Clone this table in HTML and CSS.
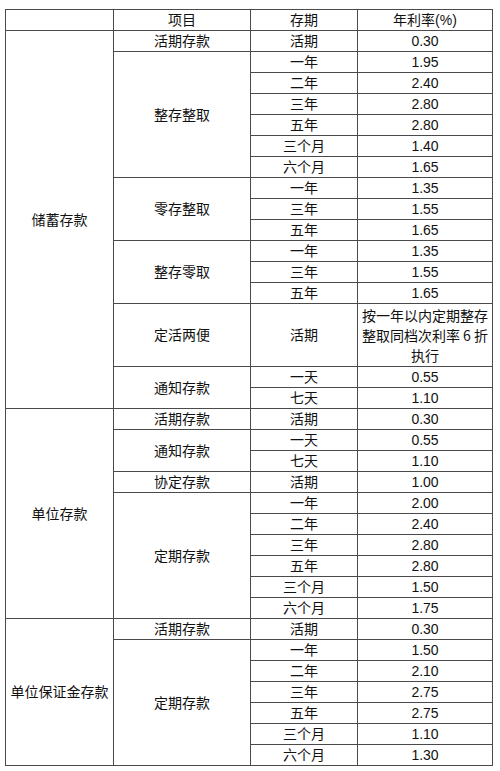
FILE: index.html
```html
<!DOCTYPE html>
<html lang="zh-CN">
<head>
<meta charset="utf-8">
<link rel="stylesheet" href="styles.css">
</head>
<body>
<table class="rates">
<colgroup>
<col class="c1"><col class="c2"><col class="c3"><col class="c4">
</colgroup>
<tr><td></td><td>项目</td><td>存期</td><td>年利率(%)</td></tr>
<tr><td rowspan="16">储蓄存款</td><td>活期存款</td><td>活期</td><td>0.30</td></tr>
<tr><td rowspan="6">整存整取</td><td>一年</td><td>1.95</td></tr>
<tr><td>二年</td><td>2.40</td></tr>
<tr><td>三年</td><td>2.80</td></tr>
<tr><td>五年</td><td>2.80</td></tr>
<tr><td>三个月</td><td>1.40</td></tr>
<tr><td>六个月</td><td>1.65</td></tr>
<tr><td rowspan="3">零存整取</td><td>一年</td><td>1.35</td></tr>
<tr><td>三年</td><td>1.55</td></tr>
<tr><td>五年</td><td>1.65</td></tr>
<tr><td rowspan="3">整存零取</td><td>一年</td><td>1.35</td></tr>
<tr><td>三年</td><td>1.55</td></tr>
<tr><td>五年</td><td>1.65</td></tr>
<tr class="tall"><td>定活两便</td><td>活期</td><td class="note">按一年以内定期整存<br>整取同档次利率 6 折<br>执行</td></tr>
<tr><td rowspan="2">通知存款</td><td>一天</td><td>0.55</td></tr>
<tr><td>七天</td><td>1.10</td></tr>
<tr><td rowspan="10">单位存款</td><td>活期存款</td><td>活期</td><td>0.30</td></tr>
<tr><td rowspan="2">通知存款</td><td>一天</td><td>0.55</td></tr>
<tr><td>七天</td><td>1.10</td></tr>
<tr><td>协定存款</td><td>活期</td><td>1.00</td></tr>
<tr><td rowspan="6">定期存款</td><td>一年</td><td>2.00</td></tr>
<tr><td>二年</td><td>2.40</td></tr>
<tr><td>三年</td><td>2.80</td></tr>
<tr><td>五年</td><td>2.80</td></tr>
<tr><td>三个月</td><td>1.50</td></tr>
<tr><td>六个月</td><td>1.75</td></tr>
<tr><td rowspan="7">单位保证金存款</td><td>活期存款</td><td>活期</td><td>0.30</td></tr>
<tr><td rowspan="6">定期存款</td><td>一年</td><td>1.50</td></tr>
<tr><td>二年</td><td>2.10</td></tr>
<tr><td>三年</td><td>2.75</td></tr>
<tr><td>五年</td><td>2.75</td></tr>
<tr><td>三个月</td><td>1.10</td></tr>
<tr><td>六个月</td><td>1.30</td></tr>
</table>
</body>
</html>
```
FILE: styles.css
```css
html, body {
  margin: 0;
  padding: 0;
  background: #ffffff;
}
body {
  padding: 9px 0 0 5px;
}
.rates {
  border-collapse: collapse;
  table-layout: fixed;
  width: 487px;
  font-family: "Liberation Sans", "Noto Sans CJK SC", sans-serif;
  font-size: 14px;
  color: #111111;
}
.c1 { width: 108px; }
.c2 { width: 137px; }
.c3 { width: 107px; }
.c4 { width: 135px; }
.rates td {
  border: 1px solid #4a4a4a;
  padding: 0;
  height: 20px;
  line-height: 18px;
  text-align: center;
  vertical-align: middle;
  white-space: nowrap;
  overflow: hidden;
}
.rates tr.tall td {
  height: 62px;
}
.rates td.note {
  font-family: "Noto Sans CJK SC", sans-serif;
  line-height: 20px;
}
```
